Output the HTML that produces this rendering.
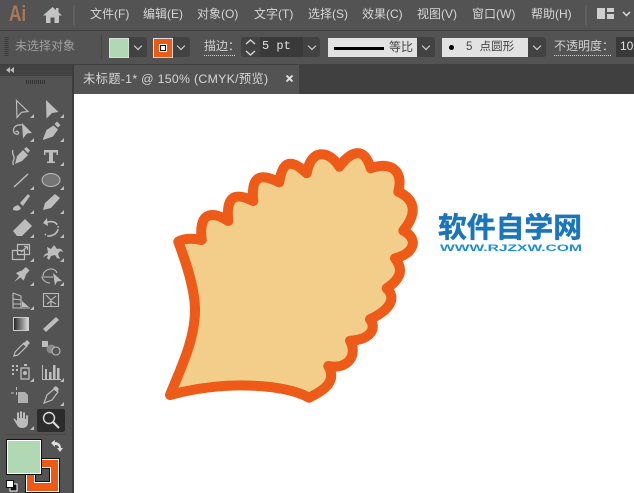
<!DOCTYPE html>
<html><head><meta charset="utf-8"><style>
html,body{margin:0;padding:0;width:634px;height:493px;overflow:hidden;background:#535353;font-family:"Liberation Sans","Noto Sans CJK SC",sans-serif}
.a{position:absolute;white-space:nowrap}
.m{top:6px;font-size:12px;line-height:17px;color:#d6d6d6}
.dd{position:absolute;background:#424242;border-radius:0 3px 3px 0;height:20px;top:37px}
.dd:after{content:"";position:absolute;left:50%;top:6px;width:5px;height:5px;margin-left:-3px;border-right:1.500px solid #ddd;border-bottom:1.500px solid #ddd;transform:rotate(45deg)}
.lbl{font-size:12px;color:#d0d0d0;top:38px;line-height:17px;border-bottom:1px dotted #d0d0d0;overflow:hidden}
</style></head><body>
<div class="a" style="left:0;top:0;width:634px;height:493px;overflow:hidden">
<div class="a" style="left:0;top:30px;width:634px;height:1px;background:#3e3e3e"></div>
<div class="a" style="left:0;top:64px;width:634px;height:30px;background:#404040"></div>
<div class="a" style="left:9px;top:-2px;font:bold 22px/32px 'Liberation Sans',sans-serif;color:#a9785a;transform:scaleX(.78);transform-origin:0 0">Ai</div>
<svg class="a" style="left:43px;top:7px" width="19" height="17" viewBox="0 0 19 17"><path fill="#c4c4c4" d="M9.500 0L0 8.500H3V16H7.500V10.500H11.500V16H16V8.500H19L15.500 5.300V1H13V3.100Z"/></svg>
<div class="a" style="left:73px;top:5px;width:2px;height:20px;background:#5f5f5f"></div>
<div class="a m" style="left:90px">文件(F)</div><div class="a m" style="left:143px">编辑(E)</div><div class="a m" style="left:197px">对象(O)</div><div class="a m" style="left:254px">文字(T)</div><div class="a m" style="left:308px">选择(S)</div><div class="a m" style="left:362px">效果(C)</div><div class="a m" style="left:417px">视图(V)</div><div class="a m" style="left:472px">窗口(W)</div><div class="a m" style="left:531px">帮助(H)</div>
<div class="a" style="left:585px;top:5px;width:2px;height:20px;background:#5f5f5f"></div>
<svg class="a" style="left:597px;top:8px" width="37" height="12"><path fill="#cfcfcf" d="M0 0h8v11H0zM10 0h7v4h-7zM10 6h7v5h-7z"/><path fill="none" stroke="#ddd" stroke-width="1.500" d="M26 4l3.500 3.500L33 4"/></svg>
<svg class="a" style="left:4px;top:37px" width="5" height="20"><path stroke="#3a3a3a" stroke-dasharray="1 1" stroke-width="4" d="M2.500 0v20"/></svg>
<div class="a" style="left:15px;top:38px;font-size:12px;line-height:17px;color:#a0a0a0">未选择对象</div>
<div class="a" style="left:101px;top:35px;width:1px;height:24px;background:#454545"></div>
<div class="dd" style="left:128px;width:19px"></div>
<div class="a" style="left:109px;top:38px;width:18px;height:18px;background:#afd8b3;border:1px solid #ddd"></div>
<div class="dd" style="left:172px;width:18px"></div>
<div class="a" style="left:153px;top:38px;width:18px;height:18px;background:#ee5a14;border:1px solid #ddd"></div>
<div class="a" style="left:159px;top:44px;width:8px;height:8px;background:#fff"></div>
<div class="a" style="left:160px;top:45px;width:6px;height:6px;background:#111"></div>
<div class="a" style="left:161px;top:46px;width:4px;height:4px;background:#fff"></div>
<div class="a lbl" style="left:204px;width:31px">描边：</div>
<div class="a" style="left:241px;top:37px;width:19px;height:20px;background:#424242;border-radius:3px 0 0 3px"></div>
<svg class="a" style="left:245px;top:39px" width="11" height="17"><path fill="none" stroke="#ddd" stroke-width="1.300" d="M1 5l4.500-4L10 5M1 12l4.500 4L10 12"/></svg>
<div class="a" style="left:260px;top:37px;width:43px;height:20px;background:#393939"></div>
<div class="a" style="left:262px;top:38px;font:12px/17px 'Liberation Mono',monospace;color:#e0e0e0">5 pt</div>
<div class="dd" style="left:303px;width:17px"></div>
<div class="a" style="left:328px;top:38px;width:89px;height:19px;background:#e2e2e2"></div>
<div class="a" style="left:334px;top:47px;width:50px;height:3px;background:#000"></div>
<div class="a" style="left:389px;top:39px;font-size:12px;line-height:17px;color:#444">等比</div>
<div class="dd" style="left:417px;width:18px"></div>
<div class="a" style="left:442px;top:38px;width:86px;height:19px;background:#e2e2e2"></div>
<div class="a" style="left:449px;top:45px;width:5px;height:5px;border-radius:50%;background:#000"></div>
<div class="a" style="left:466px;top:39px;font-size:11.500px;line-height:17px;color:#444;word-spacing:4px">5 点圆形</div>
<div class="dd" style="left:528px;width:18px"></div>
<div class="a lbl" style="left:554px;width:57px">不透明度：</div>
<div class="a" style="left:616px;top:37px;width:18px;height:20px;background:#393939"></div>
<div class="a" style="left:620px;top:38px;font-size:12px;line-height:17px;color:#e0e0e0">100</div>

<div class="a" style="left:0;top:65px;width:72px;height:428px;background:#535353"></div>
<div class="a" style="left:0;top:65px;width:72px;height:11px;background:#424242"></div>
<svg class="a" style="left:6px;top:67px" width="8" height="6"><path fill="#bbb" d="M4 0v6L0 3zM8 0v6L4 3z"/></svg>
<svg class="a" style="left:26px;top:80px" width="19" height="4"><path stroke="#333" stroke-dasharray="1 1" stroke-width="4" d="M0 2h19"/></svg>
<div class="a" style="left:72px;top:65px;width:2px;height:428px;background:#3c3c3c"></div>
<div class="a" style="left:74px;top:65px;width:225px;height:29px;background:#535353"></div>
<div class="a" style="left:83px;top:71px;font-size:12.300px;letter-spacing:.3px;line-height:17px;color:#d6d6d6">未标题-1* @ 150% (CMYK/预览)</div>
<svg class="a" style="left:286px;top:75px" width="7" height="7"><path stroke="#ddd" stroke-width="2" d="M.5.500l6 6M6.500.500l-6 6"/></svg>
<div class="a" style="left:74px;top:94px;width:560px;height:399px;background:#fff"></div>

<svg class="a" style="left:0;top:90px" width="72" height="403" viewBox="0 90 72 403">
<g fill="#bdbdbd" stroke="none">
<path d="M34 118v-4l-4 4zM64 118v-4l-4 4zM34 142v-4l-4 4zM64 142v-4l-4 4zM64 166v-4l-4 4zM34 190v-4l-4 4zM64 190v-4l-4 4zM34 214v-4l-4 4zM64 214v-4l-4 4zM34 238v-4l-4 4zM64 238v-4l-4 4zM34 262v-4l-4 4zM64 262v-4l-4 4zM34 286v-4l-4 4zM64 286v-4l-4 4zM34 310v-4l-4 4zM34 382v-4l-4 4zM64 382v-4l-4 4zM64 406v-4l-4 4zM34 430v-4l-4 4z"/>
<path fill="none" stroke="#bdbdbd" stroke-width="1.200" d="M16.500 100.500L28 111.500l-6.500.8L17 117.500z"/>
<path d="M46 100l12.500 12-6.500 1-5.500 5.500z"/>
<path d="M22 123l10 10-5 .5-4 5z"/>
<path fill="none" stroke="#bdbdbd" stroke-width="1.300" d="M22 125c-5-1-9 2-8.500 6 .5 3 4 4 5 2.500 .6-1.600-1.500-3-3-1.500"/>
<path d="M43 139l3.500-9 7-4.500 4.500 4-5 7-10 3.500zM54.500 124l2.500-2.500 3.500 3.500-2.500 2.500z"/>
<path d="M15 164l2-8 6-6 5 5-6 6-7 3zM24 149l2.500-2 3.500 3.500-2 2.500z"/>
<path fill="none" stroke="#bdbdbd" stroke-width="1.300" d="M13 150c-2 4 2 5 1 9-.6 2-2 3-.5 6"/>
<path d="M44 150h14v5h-1.500v-2.500H53v9h2v1.500h-8v-1.500h2v-9h-3.500v2.500H44z"/>
<path fill="none" stroke="#bdbdbd" stroke-width="1.500" d="M14 187l14-13"/>
<ellipse cx="51" cy="180" rx="9" ry="6.500" fill="#757575" stroke="#bdbdbd" stroke-width="1"/>
<path d="M13 210c0-4 3-4 5-5l3 3c-1 3-5 3-8 2zM20 203l8-9 2 2-7 10z"/>
<path d="M43 210l2-7 10-9 5 4-9 10z"/>
<path d="M13 231l12-12 7 7-10 10h-5z"/>
<path fill="none" stroke="#bdbdbd" stroke-width="1.600" stroke-dasharray="14 1.500 1.500 1.500" d="M45 224l3-2c7-2 11 3 10 7-.5 4-4 6-8 7-3 .5-4-1-5-2"/><path d="M47 218l-4 5 5 3z"/>
<path fill="none" stroke="#bdbdbd" stroke-width="1.200" d="M12.500 250.500h12v9h-12zM17.500 244.500h12v10h-12zM21 252l6-5M24 246.500h3.500v3.500"/>
<path d="M43 258l2-4 3-1-1-6 4 2 3-4 3 4c3-1 5 0 6 3l-3-1-2 3 2 5-3-1-2-3-4 1-2 4-2-2 1-3-3 1z"/>
<path d="M14 282l5-6-3-3 3-1.500 3-1 4-3.500 3.500 3.500-3.500 4-1 3-1.500 3-3-3z"/>
<path fill="none" stroke="#bdbdbd" stroke-width="1.100" d="M43 276c0-4 4-7 8-7 3 0 5 1 6 4M50 283c-4 0-8-3-8-7M43 277h10"/><path d="M53 273l9 8-5 .5-2 4z"/>
<path fill="none" stroke="#bdbdbd" stroke-width="1.100" d="M13 293v15h17M13 293l8 3v12M13 299l8 1M13 304h8"/><path d="M22 301l7 6h-7z"/>
<path fill="none" stroke="#bdbdbd" stroke-width="1.100" d="M43.500 293.500h15v13h-15zM46 295l5 5 5-4M51 300v6M47 304l4-3 5 3"/>
<rect x="13.500" y="317.500" width="15" height="13" fill="url(#gr)" stroke="#ccc" stroke-width="1"/>
<path d="M46 332l-3-3 13-12 3 3-13 12z"/>
<path fill="none" stroke="#bdbdbd" stroke-width="1.200" d="M14 356l1-4 9-9 3 3-9 9z"/><path d="M23 344l4-4 3 3-4 4z"/>
<path d="M42 341h6v6h-6zM52 345l3 1-3 4z"/>
<circle cx="51" cy="349" r="4.500" fill="#888"/><circle cx="56" cy="351" r="4" fill="#535353" stroke="#bdbdbd" stroke-width="1.100"/>
<path d="M12 365h2v2h-2zM16 365h2v2h-2zM12 369h2v2h-2zM16 369h2v2h-2zM12 373h2v2h-2zM24 364h3v2h-3z"/>
<rect x="21" y="368" width="8" height="11" fill="none" stroke="#bdbdbd" stroke-width="1.300"/><circle cx="25" cy="373" r="2" fill="#bdbdbd"/>
<path d="M45 369h2v10h-2zM49 372h2.500v7H49zM53 365h2.500v14H53zM57 368h2.500v11H57zM42 365h1v14h18v1H42z"/>
<path d="M16 387h1v3h-1zM16 392h1v3h-1zM11 392.500h3v1h-3z"/><path d="M18 392h7l3 3v8H18z" fill="#b0b0b0"/>
<path fill="none" stroke="#bdbdbd" stroke-width="1.200" d="M44 403l3-8 7-6 4 3-6 8z"/><path d="M53 388l3-2 3 3-2 3z"/>
<path d="M14 420l3 5c1 2 3 3 5 3 4 0 6-2 6-6v-6c0-1-2-1-2 0v3h-1v-6c0-1-2-1-2 0v5h-1v-6c0-1-2-1-2 0v6h-1v-5c0-1-2-1-2 0v8l-2-2c-1-1-2-.500-1 1z"/>
</g>
<defs><linearGradient id="gr"><stop offset="0" stop-color="#222"/><stop offset="1" stop-color="#ddd"/></linearGradient></defs>
<rect x="37" y="409" width="28" height="23" rx="2" fill="#2c2c2c"/>
<circle cx="49" cy="418" r="5.500" fill="none" stroke="#ddd" stroke-width="1.400"/><path d="M53 422l6 6" stroke="#ddd" stroke-width="2"/>
<rect x="5" y="434" width="61" height="1" fill="#484848"/>
<path fill="#ddd" d="M51 443l4-3v2c3 0 6 2 6 6h2l-3 4-3-4h2c0-2-2-3-4-3v2z"/>
<rect x="25" y="458" width="35" height="36" fill="#111"/><rect x="26" y="459" width="33" height="33" fill="#fff"/><rect x="27" y="460" width="31" height="31" fill="#ee5a14"/>
<rect x="34" y="467" width="17" height="16" fill="#fff"/><rect x="35" y="468" width="15" height="14" fill="#111"/><rect x="36" y="469" width="13" height="12" fill="#535353"/>
<rect x="6" y="439" width="36" height="36" fill="#111"/><rect x="7" y="440" width="34" height="34" fill="#fff"/><rect x="8" y="441" width="32" height="32" fill="#afd8b3"/>
<rect x="10" y="484" width="7" height="7" fill="#111" stroke="#fff"/><rect x="6.500" y="480.500" width="7" height="7" fill="#fff" stroke="#111"/>
</svg>

<svg class="a" style="left:74px;top:94px" width="560" height="399" viewBox="74 94 560 399">
<path fill="#f2ce8a" stroke="#ee5a17" stroke-width="10" stroke-linejoin="round" stroke-linecap="round" d="M178.300 241.700C185 237.700 193.300 238.300 201.700 240C198 208 216 213 228.300 221C225 190 241 195 253.300 201C250 170 266 176 279.300 182.300C283 155 296 163 306.700 173.300C311 148 329 150 339.300 166.700C350 152 364 145 370.700 168.300C390 161 404 170 398.300 191.700C416 200 417 214 403.300 230.700C418 238 416 253 395 258.300C401 266 405 276 386.700 288.300C397 298 390 310 370 319.300C378 330 368 340 350 340.700C358 355 348 370 328.300 366C337 381 325 390 309 397.700C285 384 225 380 170 395C180 370 195 340 195 310C195 290 187 265 178.300 241.700Z"/>
<text x="438" y="237" textLength="144" lengthAdjust="spacingAndGlyphs" font-family="'Noto Sans CJK SC',sans-serif" font-weight="700" font-size="28" fill="#1b75bb" stroke="#1b75bb" stroke-width=".5">软件自学网</text>
<text x="440" y="251" textLength="142" lengthAdjust="spacingAndGlyphs" font-family="'Liberation Sans',sans-serif" font-weight="700" font-size="9.500" fill="#1b8fd6">WWW.RJZXW.COM</text>
</svg>
</div>
</body></html>
